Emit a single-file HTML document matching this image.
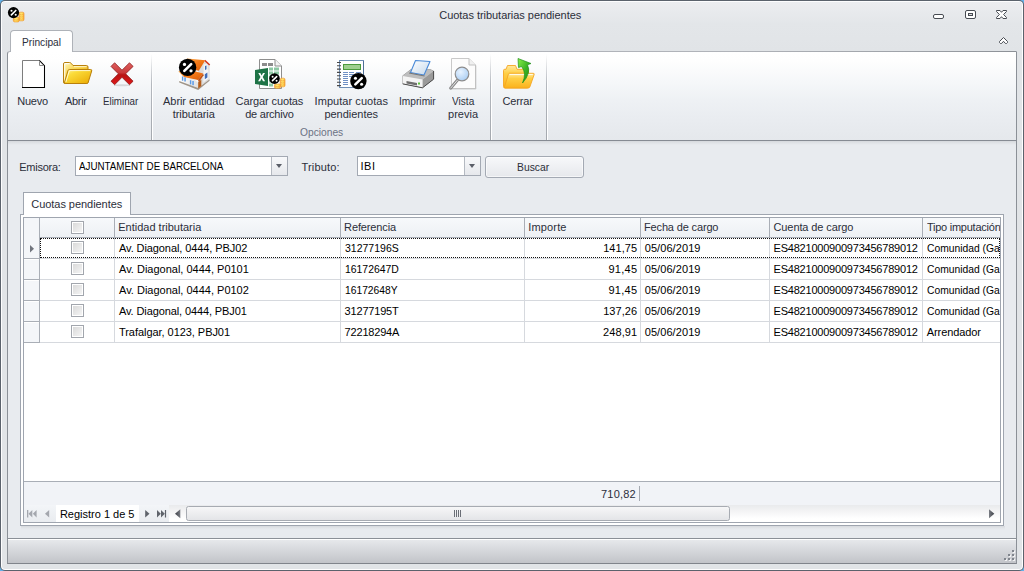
<!DOCTYPE html>
<html lang="es">
<head>
<meta charset="utf-8">
<title>Cuotas tributarias pendientes</title>
<style>
*{box-sizing:border-box;margin:0;padding:0}
html,body{width:1024px;height:571px;overflow:hidden;background:#64b2ea}
body{font-family:"Liberation Sans",sans-serif;font-size:11px;color:#2b2e3a;position:relative;line-height:13px}
div,svg{position:absolute}
.t{white-space:nowrap;height:13px;line-height:13px}
#win{left:0;top:0;width:1024px;height:571px;background:#5b626c;border-radius:5px}
#hl{left:1px;top:1px;width:1022px;height:569px;background:#fdfdfe;border-radius:4px}
#frame{left:2px;top:2px;width:1020px;height:567px;background:#e1e4e7;border-radius:3px}
#titlebg{left:2px;top:2px;width:1020px;height:49px;background:linear-gradient(#ecedf0 0,#e3e6e9 45%,#e1e4e7 100%);border-radius:3px 3px 0 0}
/* ribbon */
#tab{left:10px;top:30px;width:63px;height:22px;background:#fff;border:1px solid #aeb2b8;border-bottom:0;border-radius:4px 4px 0 0}
#ribbon{left:7px;top:51px;width:1010px;height:90px;background:linear-gradient(#ffffff 0,#fefefe 10%,#f5f7f9 35%,#eef1f4 55%,#eaedf1 72%,#e5e8ec 100%);border:1px solid #b2b5bb;border-left-color:#8b9097;border-right-color:#8b9097;border-bottom-color:#868b93;border-radius:3px 0 0 0}
#rtop{left:60px;top:51px;width:956px;height:1px;background:linear-gradient(90deg,#b2b5bb 0,#b0b3b9 70%,#9da1a7 90%,#8c9096 100%)}
#tabcover{left:11px;top:51px;width:61px;height:1px;background:#fff}
.sep{top:54px;width:1px;height:86px;background:linear-gradient(rgba(169,173,179,0),#b4b8be 35%,#a4a8ae)}
.sep2{top:54px;width:1px;height:86px;background:linear-gradient(rgba(255,255,255,0),#fff 35%)}
/* content */
#content{left:7px;top:141px;width:1010px;height:397px;background:#e8ebef;border-left:1px solid #8b9097;border-right:1px solid #8b9097}
#shadow{left:8px;top:141px;width:1008px;height:4px;background:linear-gradient(#d5d8dc,#e0e3e7 50%,#e8ebef)}
.combo{top:156px;height:20px;background:#fff;border:1px solid #a3a9b3}
.combo .btn{right:0;top:0;width:16px;height:18px;border-left:1px solid #b4b9c1;background:linear-gradient(#f8f9fb,#e6e8ec)}
.combo .btn:after{content:"";position:absolute;left:4.4px;top:7px;border-style:solid;border-color:#5a5e68 transparent;border-width:4px 3.5px 0}
#buscar{left:485px;top:156px;width:99px;height:22px;border:1px solid #a3a9b3;border-radius:3px;background:linear-gradient(#f7f8fa,#e6e8ec);box-shadow:inset 0 0 0 1px rgba(255,255,255,.6)}
/* tab control */
#pshadow{left:21px;top:526px;width:984px;height:4px;background:linear-gradient(#d6d9dd,#e2e5e9 50%,#e8ebef)}
#page{left:20px;top:214px;width:984px;height:312px;background:#fff;border:1px solid #9fa5af}
#ptab{left:23px;top:192px;width:108px;height:23px;background:#fff;border:1px solid #9fa5af;border-bottom:0}
#grid{left:23px;top:217px;width:978px;height:306px;border:1px solid #9fa5af;background:#fff;overflow:hidden}
#ghead{left:0;top:0;width:976px;height:20px;background:linear-gradient(#f7f9fb,#edf0f4);border-bottom:1px solid #a9aeb6}
#gind{left:0;top:0;width:16px;height:125px;background:#f4f6f9;border-right:1px solid #a9aeb6}
.hc{top:0;height:20px;border-left:1px solid #a9aeb6}
.il{left:0;width:15px;height:1px;background:#a9aeb6;box-shadow:0 1px 0 #fff}
.vl{top:20px;width:1px;height:104px;background:#d6d9de}
.hl{left:16px;width:960px;height:1px;background:#d6d9de}
.cb{width:13px;height:13px;border:1px solid #a2a6ad;background:#fff}
.cb:after{content:"";position:absolute;left:1px;top:1px;width:9px;height:9px;background:linear-gradient(135deg,#dadada,#f4f4f4)}
#focus{left:16px;top:20px;width:960px;height:20px;border:1px dotted #111}
#gfoot{left:0;top:263px;width:976px;height:24px;background:#f1f3f7;border-top:1px solid #a9aeb6}
#gnav{left:0;top:287px;width:976px;height:17px;background:linear-gradient(#e9eaec,#f6f6f7 45%,#fff 80%)}
#gnavb{left:0;top:287px;width:145px;height:17px;background:linear-gradient(#f3f5f8,#e9ecf0)}
#status{left:7px;top:538px;width:1010px;height:26px;border:1px solid #8b9097;border-bottom-color:#80848b;background:linear-gradient(#fff 0,#fff 1px,#e6e8eb 1px,#c2c4c9 100%)}
.dot{width:2px;height:2px;background:#80858d;box-shadow:1px 1px 0 rgba(255,255,255,.75)}
</style>
</head>
<body>
<div id="win"></div><div id="hl"></div><div id="frame"></div><div id="titlebg"></div>
<div id="ribbon"></div>
<div id="rtop"></div><div id="tab"></div><div id="tabcover"></div>
<div class="sep" style="left:151px"></div><div class="sep2" style="left:152px"></div>
<div class="sep" style="left:490px"></div><div class="sep2" style="left:491px"></div>
<div class="sep" style="left:546px"></div><div class="sep2" style="left:547px"></div>
<div id="content"></div>
<div id="shadow"></div>
<div class="combo" style="left:75px;width:213px"><div class="btn"></div></div>
<div class="combo" style="left:357px;width:124px"><div class="btn"></div></div>
<div id="buscar"></div>
<div id="pshadow"></div>
<div id="page"></div>
<div id="ptab"></div>
<div id="grid">
  <div id="ghead"></div>
  <div id="gind"></div>
  <div class="il" style="top:40px"></div><div class="il" style="top:61px"></div><div class="il" style="top:82px"></div><div class="il" style="top:103px"></div><div class="il" style="top:124px;width:16px"></div>
  <div class="hc" style="left:15px;width:75px"></div>
  <div class="hc" style="left:90px;width:226px"></div>
  <div class="hc" style="left:316px;width:184px"></div>
  <div class="hc" style="left:500px;width:116px"></div>
  <div class="hc" style="left:616px;width:129px"></div>
  <div class="hc" style="left:745px;width:153px"></div>
  <div class="hc" style="left:898px;width:80px"></div>
  <div class="vl" style="left:90px"></div>
  <div class="vl" style="left:316px"></div>
  <div class="vl" style="left:500px"></div>
  <div class="vl" style="left:616px"></div>
  <div class="vl" style="left:745px"></div>
  <div class="vl" style="left:898px"></div>
  <div class="hl" style="top:40px"></div>
  <div class="hl" style="top:61px"></div>
  <div class="hl" style="top:82px"></div>
  <div class="hl" style="top:103px"></div>
  <div class="hl" style="top:124px"></div>
  <div id="focus"></div>
  <div class="cb" style="left:47px;top:3px"></div>
  <div class="cb" style="left:47px;top:23px"></div>
  <div class="cb" style="left:47px;top:44px"></div>
  <div class="cb" style="left:47px;top:65px"></div>
  <div class="cb" style="left:47px;top:86px"></div>
  <div class="cb" style="left:47px;top:107px"></div>
  <div id="gfoot"></div>
  <div id="gnav"></div><div id="gnavb"></div>
</div>
<div style="left:639px;top:486px;width:1px;height:15px;background:#a4a9b1"></div>
<div style="left:56px;top:505px;width:83px;height:17px;background:#fff"></div>
<div id="status"></div>
<div class="dot" style="left:1012px;top:550px"></div>
<div class="dot" style="left:1008px;top:554px"></div><div class="dot" style="left:1012px;top:554px"></div>
<div class="dot" style="left:1004px;top:558px"></div><div class="dot" style="left:1008px;top:558px"></div><div class="dot" style="left:1012px;top:558px"></div>
<div class="t" style="left:439.3px;top:9px;letter-spacing:-0.04px">Cuotas tributarias pendientes</div>
<div class="t" style="left:21.5px;top:36px;transform:scaleX(0.9244);transform-origin:0 0">Principal</div>
<div class="t" style="left:17.2px;top:95px;letter-spacing:-0.2px">Nuevo</div>
<div class="t" style="left:65px;top:95px;letter-spacing:-0.3px">Abrir</div>
<div class="t" style="left:103.3px;top:95px;transform:scaleX(0.8872);transform-origin:0 0">Eliminar</div>
<div class="t" style="left:163.1px;top:95px;letter-spacing:-0.08px">Abrir entidad</div>
<div class="t" style="left:172.7px;top:108px;letter-spacing:-0.07px">tributaria</div>
<div class="t" style="left:235.6px;top:95px;letter-spacing:-0.11px">Cargar cuotas</div>
<div class="t" style="left:245.2px;top:108px;letter-spacing:-0.24px">de archivo</div>
<div class="t" style="left:314.6px;top:95px;letter-spacing:0.05px">Imputar cuotas</div>
<div class="t" style="left:324.4px;top:108px;letter-spacing:-0.01px">pendientes</div>
<div class="t" style="left:398.6px;top:95px;transform:scaleX(0.9256);transform-origin:0 0">Imprimir</div>
<div class="t" style="left:452.2px;top:95px;transform:scaleX(0.9167);transform-origin:0 0">Vista</div>
<div class="t" style="left:448.1px;top:108px">previa</div>
<div class="t" style="left:502.5px;top:95px;letter-spacing:-0.14px">Cerrar</div>
<div class="t" style="left:300.2px;top:126px;transform:scaleX(0.9304);transform-origin:0 0;color:#6c7284">Opciones</div>
<div class="t" style="left:19.3px;top:161px;letter-spacing:-0.27px">Emisora:</div>
<div class="t" style="left:78.9px;top:160px;transform:scaleX(0.8895);transform-origin:0 0;color:#000">AJUNTAMENT DE BARCELONA</div>
<div class="t" style="left:301.6px;top:161px;letter-spacing:0.14px">Tributo:</div>
<div class="t" style="left:360.6px;top:160px;letter-spacing:0.45px;color:#000">IBI</div>
<div class="t" style="left:517.3px;top:161px;transform:scaleX(0.9394);transform-origin:0 0">Buscar</div>
<div class="t" style="left:31.3px;top:198px;letter-spacing:-0.05px">Cuotas pendientes</div>
<div class="t" style="left:118.3px;top:221px;letter-spacing:-0.01px">Entidad tributaria</div>
<div class="t" style="left:344.1px;top:221px;letter-spacing:-0.13px">Referencia</div>
<div class="t" style="left:528.3px;top:221px;letter-spacing:0.15px">Importe</div>
<div class="t" style="left:644.0px;top:221px;letter-spacing:-0.15px">Fecha de cargo</div>
<div class="t" style="left:773.5px;top:221px;letter-spacing:-0.1px">Cuenta de cargo</div>
<div class="t" style="left:926.9px;top:221px;letter-spacing:-0.24px;width:73.1px;overflow:hidden">Tipo imputación</div>
<div class="t" style="left:119px;top:242px;letter-spacing:-0.09px;color:#000">Av. Diagonal, 0444, PBJ02</div>
<div class="t" style="left:344.6px;top:242px;transform:scaleX(0.9545);transform-origin:0 0;color:#000">31277196S</div>
<div class="t" style="left:603.2px;top:242px;letter-spacing:0.06px;color:#000">141,75</div>
<div class="t" style="left:644.7px;top:242px;letter-spacing:0.08px;color:#000">05/06/2019</div>
<div class="t" style="left:773.5px;top:242px;letter-spacing:-0.21px;color:#000">ES4821000900973456789012</div>
<div class="t" style="left:926.5px;top:242px;transform:scaleX(0.9377);transform-origin:0 0;color:#000;width:78.4px;overflow:hidden">Comunidad (Ga</div>
<div class="t" style="left:119px;top:263px;color:#000">Av. Diagonal, 0444, P0101</div>
<div class="t" style="left:345.2px;top:263px;transform:scaleX(0.9464);transform-origin:0 0;color:#000">16172647D</div>
<div class="t" style="left:608.5px;top:263px;letter-spacing:0.25px;color:#000">91,45</div>
<div class="t" style="left:644.7px;top:263px;letter-spacing:0.08px;color:#000">05/06/2019</div>
<div class="t" style="left:773.5px;top:263px;letter-spacing:-0.21px;color:#000">ES4821000900973456789012</div>
<div class="t" style="left:926.5px;top:263px;transform:scaleX(0.9377);transform-origin:0 0;color:#000;width:78.4px;overflow:hidden">Comunidad (Ga</div>
<div class="t" style="left:119px;top:284px;color:#000">Av. Diagonal, 0444, P0102</div>
<div class="t" style="left:345.2px;top:284px;transform:scaleX(0.9345);transform-origin:0 0;color:#000">16172648Y</div>
<div class="t" style="left:608.5px;top:284px;letter-spacing:0.25px;color:#000">91,45</div>
<div class="t" style="left:644.7px;top:284px;letter-spacing:0.08px;color:#000">05/06/2019</div>
<div class="t" style="left:773.5px;top:284px;letter-spacing:-0.21px;color:#000">ES4821000900973456789012</div>
<div class="t" style="left:926.5px;top:284px;transform:scaleX(0.9377);transform-origin:0 0;color:#000;width:78.4px;overflow:hidden">Comunidad (Ga</div>
<div class="t" style="left:119px;top:305px;letter-spacing:-0.11px;color:#000">Av. Diagonal, 0444, PBJ01</div>
<div class="t" style="left:344.6px;top:305px;letter-spacing:-0.19px;color:#000">31277195T</div>
<div class="t" style="left:603.2px;top:305px;letter-spacing:0.06px;color:#000">137,26</div>
<div class="t" style="left:644.7px;top:305px;letter-spacing:0.08px;color:#000">05/06/2019</div>
<div class="t" style="left:773.5px;top:305px;letter-spacing:-0.21px;color:#000">ES4821000900973456789012</div>
<div class="t" style="left:926.5px;top:305px;transform:scaleX(0.9377);transform-origin:0 0;color:#000;width:78.4px;overflow:hidden">Comunidad (Ga</div>
<div class="t" style="left:119px;top:326px;letter-spacing:-0.05px;color:#000">Trafalgar, 0123, PBJ01</div>
<div class="t" style="left:344.6px;top:326px;letter-spacing:-0.19px;color:#000">72218294A</div>
<div class="t" style="left:603.0px;top:326px;letter-spacing:0.1px;color:#000">248,91</div>
<div class="t" style="left:644.7px;top:326px;letter-spacing:0.08px;color:#000">05/06/2019</div>
<div class="t" style="left:773.5px;top:326px;letter-spacing:-0.21px;color:#000">ES4821000900973456789012</div>
<div class="t" style="left:926.8px;top:326px;letter-spacing:-0.09px;color:#000">Arrendador</div>
<div class="t" style="left:601.0px;top:488px;letter-spacing:0.2px">710,82</div>
<div class="t" style="left:59.9px;top:508px;color:#000">Registro 1 de 5</div>
<svg width="1024" height="571" viewBox="0 0 1024 571" style="left:0;top:0;pointer-events:none">
<defs>
<linearGradient id="gcoin" x1="0" y1="0" x2="1" y2="0"><stop offset="0" stop-color="#f8b040"/><stop offset=".4" stop-color="#ffec70"/><stop offset=".7" stop-color="#ffd850"/><stop offset="1" stop-color="#f5a030"/></linearGradient>
<linearGradient id="gfold" x1="0" y1="0" x2="1" y2="1"><stop offset="0" stop-color="#fff3a0"/><stop offset=".3" stop-color="#fbdc3a"/><stop offset="1" stop-color="#eaa800"/></linearGradient>
<linearGradient id="gfoldb" x1="0" y1="0" x2="1" y2="1"><stop offset="0" stop-color="#fff6c0"/><stop offset=".4" stop-color="#f9d54a"/><stop offset="1" stop-color="#e5a200"/></linearGradient>
<linearGradient id="gfold2" x1="0" y1="0" x2="0" y2="1"><stop offset="0" stop-color="#ffe9a0"/><stop offset=".35" stop-color="#ffcf45"/><stop offset="1" stop-color="#fbb21c"/></linearGradient>
<linearGradient id="gred" x1="0" y1="0" x2="0" y2="1"><stop offset="0" stop-color="#e06060"/><stop offset=".45" stop-color="#c83a3a"/><stop offset=".55" stop-color="#b81414"/><stop offset="1" stop-color="#e01818"/></linearGradient>
<linearGradient id="groof" x1="0" y1="0" x2="1" y2="1"><stop offset="0" stop-color="#ffb050"/><stop offset=".5" stop-color="#f57a18"/><stop offset="1" stop-color="#d85a08"/></linearGradient>
<linearGradient id="gwall" x1="0" y1="0" x2="1" y2="0"><stop offset="0" stop-color="#ffffff"/><stop offset="1" stop-color="#e0e0e0"/></linearGradient>
<linearGradient id="gprn" x1="0" y1="0" x2="0" y2="1"><stop offset="0" stop-color="#a8a8a8"/><stop offset="1" stop-color="#dcdcdc"/></linearGradient>
<linearGradient id="gpaper" x1="0" y1="0" x2="1" y2="1"><stop offset="0" stop-color="#ffffff"/><stop offset="1" stop-color="#c4d8ec"/></linearGradient>
<radialGradient id="glens" cx=".4" cy=".35" r=".7"><stop offset="0" stop-color="#e8f3ff"/><stop offset="1" stop-color="#a9cdf3"/></radialGradient>
<linearGradient id="ggreen" x1="0" y1="0" x2="1" y2="1"><stop offset="0" stop-color="#8af048"/><stop offset=".5" stop-color="#3cb424"/><stop offset="1" stop-color="#1a8a14"/></linearGradient>
<linearGradient id="gthumb" x1="0" y1="0" x2="0" y2="1"><stop offset="0" stop-color="#f7f7f8"/><stop offset="1" stop-color="#e3e4e7"/></linearGradient>
<linearGradient id="garr" x1="0" y1="0" x2="1" y2="0"><stop offset="0" stop-color="#7a7d84"/><stop offset="1" stop-color="#3c3f46"/></linearGradient>
<linearGradient id="garl" x1="1" y1="0" x2="0" y2="0"><stop offset="0" stop-color="#7a7d84"/><stop offset="1" stop-color="#3c3f46"/></linearGradient>
</defs>
<g><rect x="19.00" y="12.20" width="5.00" height="8.60" rx="1.3" ry="1.6" fill="url(#gcoin)" stroke="#f09a30" stroke-width="0.7"/><path d="M19.30 14.35Q21.50 15.45 23.70 14.35" fill="none" stroke="#f2a040" stroke-width="0.7"/><path d="M19.30 16.50Q21.50 17.60 23.70 16.50" fill="none" stroke="#f2a040" stroke-width="0.7"/><path d="M19.30 18.65Q21.50 19.75 23.70 18.65" fill="none" stroke="#f2a040" stroke-width="0.7"/><rect x="13.30" y="17.30" width="6.00" height="4.60" rx="1.3" ry="1.6" fill="url(#gcoin)" stroke="#f09a30" stroke-width="0.7"/><path d="M13.60 19.60Q16.30 20.70 19.00 19.60" fill="none" stroke="#f2a040" stroke-width="0.7"/><circle cx="13.5" cy="12.6" r="5.6" fill="#000"/><line x1="11.40" y1="14.80" x2="15.80" y2="10.50" stroke="#fff" stroke-width="1.70" stroke-linecap="round"/><circle cx="11.50" cy="10.70" r="1.05" fill="#fff"/><circle cx="15.70" cy="14.80" r="1.05" fill="#fff"/></g>
<rect x="933.5" y="14.5" width="10" height="4" rx="1.5" fill="#fff" stroke="#474b52"/>
<rect x="965.5" y="10.5" width="10" height="8" rx="1.5" fill="#fff" stroke="#474b52"/><rect x="968.5" y="13.5" width="4" height="2" fill="#d8dade" stroke="#474b52"/>
<path d="M996.5 10.5H1000L1001.5 12.3L1003 10.5H1006.5V11.5L1003.6 14.5L1006.5 17.5V18.5H1003L1001.5 16.7L1000 18.5H996.5V17.5L999.4 14.5L996.5 11.5Z" fill="#fff" stroke="#474b52" stroke-linejoin="round"/>
<path d="M999.5 41.5L1003.5 37.5L1007.5 41.5V42.5L1006.5 43.5H1005.5L1003.5 41.3L1001.5 43.5H1000.5L999.5 42.5Z" fill="#fff" stroke="#474b52" stroke-linejoin="round"/>
<g>
<path d="M22.5 60.5H39L44.5 66V87.5H22.5Z" fill="#fff"/>
<path d="M22.5 87.5V60.5H39" fill="none" stroke="#7d7d7d"/>
<path d="M39.3 60.3L44.5 65.6V87.5H22" fill="none" stroke="#000" stroke-width="1.05"/>
<path d="M39.5 61.5V65.5H43.6" fill="none" stroke="#8a8a8a" stroke-width="1"/>
</g>
<g stroke-linejoin="round">
<path d="M63.5 64Q63.5 62.5 65 62.5H69.5Q70.5 62.5 71.2 63.3L73 65.5H86.5Q88 65.5 88 67V82Q88 83.5 86.5 83.5H65Q63.5 83.5 63.5 82Z" fill="url(#gfoldb)" stroke="#b9800c"/>
<path d="M64.7 82V64.3Q64.7 63.6 65.4 63.6H69.5" fill="none" stroke="#fff" stroke-width="1.1" opacity=".85"/>
<path d="M74 66.7H86.6" stroke="#fff7d0" stroke-width="1"/>
<path d="M69.3 69.5H90.6Q92.2 69.5 91.7 71L88.2 82.4Q87.8 83.5 86.5 83.5H65.3Q64 83.5 64.5 82.2L68 70.5Q68.3 69.5 69.3 69.5Z" fill="url(#gfold)" stroke="#b9800c"/>
<path d="M65.9 82L69.3 70.9Q69.4 70.6 69.9 70.6H90.3" fill="none" stroke="#fffbe0" stroke-width="1" opacity=".9"/>
</g>
<g>
<ellipse cx="122" cy="85.2" rx="8" ry="1" fill="#000" opacity=".12"/>
<path d="M114.6 62.8L122 70.2L129.5 62.8L133.1 66.4L125.6 73.8L133.1 81.2L129.5 84.7L122 77.3L114.6 84.7L111 81.2L118.4 73.8L111 66.4Z" fill="url(#gred)" stroke="#8e1c1c" stroke-width=".8" stroke-linejoin="round"/>
</g>
<g stroke-linejoin="round">
<path d="M179.2 81L179.2 72L191 76.5L198.2 83V88Z" fill="url(#gwall)"/>
<path d="M198.2 88V71L205.3 60.8L209.6 65.5V79.3Z" fill="#dcdcdc"/>
<path d="M203.6 64.6L207.6 63.2V70.6L203.6 73Z" fill="#f4f4f4"/>
<path d="M203.4 72.4L208.4 69.6V78.6L203.4 82.4Z" fill="#f4f4f4"/>
<path d="M179.2 81L198.2 88L209.6 79.3V80.8L198.2 90L179.2 82.6Z" fill="#a0968a"/>
<path d="M187 58.6L205.3 60.2L198.8 70.8L183 67.5Z" fill="url(#groof)"/>
<path d="M205.2 59.8L210.2 64.6L209.2 65.6L204.6 61.2Z" fill="#d2321a"/>
<path d="M178.3 71.2L190 70L203.1 73.4L198 80L184 77Z" fill="url(#groof)"/>
<path d="M198 80L203.1 73.4L203.6 75.2L199 82Z" fill="#c4500e"/>
<rect x="181.9" y="76.5" width="1.4" height="4.2" fill="#5a9ae6"/><rect x="184.3" y="77.3" width="1.5" height="4.2" fill="#5a9ae6"/>
<rect x="189.9" y="80.2" width="1.4" height="4.2" fill="#5a9ae6"/><rect x="192.3" y="81" width="1.5" height="4.2" fill="#5a9ae6"/>
<path d="M198.2 82.2L201.3 79.6V86L198.2 88.4Z" fill="#b45c1a"/>
<path d="M205 66L206.5 65.4V69.2L205 70Z" fill="#3f6cb8"/>
<path d="M204.8 74.2L207.4 72.6V77.6L204.8 79.2Z" fill="#3f6cb8"/>
</g>
<circle cx="187.6" cy="67.4" r="8.7" fill="#000"/><line x1="184.34" y1="70.82" x2="191.17" y2="64.14" stroke="#fff" stroke-width="2.64" stroke-linecap="round"/><circle cx="184.49" cy="64.45" r="1.63" fill="#fff"/><circle cx="191.02" cy="70.82" r="1.63" fill="#fff"/>
<g>
<path d="M259.5 59.5H275L281.5 66V88.5H259.5Z" fill="#fff" stroke="#8e8e8e"/>
<path d="M275 59.5V66H281.5" fill="#f4f4f4" stroke="#8e8e8e"/>
<rect x="262" y="63" width="5" height="3" fill="#8c8c8c"/><rect x="268" y="63" width="5" height="3" fill="#8c8c8c"/>
<g fill="#8cc8a4"><rect x="269" y="67.5" width="4" height="3"/><rect x="274" y="67.5" width="5" height="3"/><rect x="269" y="71.5" width="4" height="3"/><rect x="274" y="71.5" width="5" height="3"/><rect x="269" y="75.5" width="4" height="3"/><rect x="269" y="79.5" width="4" height="3"/><rect x="269" y="83.5" width="4" height="3"/></g>
<path d="M255 70L268 68V86L255 84Z" fill="#1e7346"/>
<path d="M258.3 73L260.3 73L261.6 75.6L263 73L265 73L262.7 77L265.1 81.2H263L261.6 78.5L260.2 81.2H258.1L260.5 77Z" fill="#fff"/>
</g>
<g><rect x="280.20" y="78.20" width="4.80" height="8.60" rx="1.3" ry="1.6" fill="url(#gcoin)" stroke="#f09a30" stroke-width="0.7"/><path d="M280.50 80.35Q282.60 81.45 284.70 80.35" fill="none" stroke="#f2a040" stroke-width="0.7"/><path d="M280.50 82.50Q282.60 83.60 284.70 82.50" fill="none" stroke="#f2a040" stroke-width="0.7"/><path d="M280.50 84.65Q282.60 85.75 284.70 84.65" fill="none" stroke="#f2a040" stroke-width="0.7"/><rect x="274.40" y="84.00" width="6.20" height="4.20" rx="1.3" ry="1.6" fill="url(#gcoin)" stroke="#f09a30" stroke-width="0.7"/><path d="M274.70 86.10Q277.50 87.20 280.30 86.10" fill="none" stroke="#f2a040" stroke-width="0.7"/><circle cx="274.5" cy="78.6" r="5.3" fill="#000"/><line x1="272.51" y1="80.68" x2="276.68" y2="76.61" stroke="#fff" stroke-width="1.61" stroke-linecap="round"/><circle cx="272.61" cy="76.80" r="0.99" fill="#fff"/><circle cx="276.58" cy="80.68" r="0.99" fill="#fff"/></g>
<g>
<rect x="339.5" y="60.5" width="24" height="27" fill="#fff" stroke="#6f8fb6"/>
<path d="M363.5 61V87.5" stroke="#4f6f96" stroke-width="1"/>
<rect x="343.5" y="64.5" width="17" height="5" fill="#9fcf8f" stroke="#4c9a3c"/>
<g stroke="#7090c4" stroke-width="1"><path d="M343 72.5H348M349 72.5H354M356 72.5H361M343 74.5H348M349 74.5H354M343 76.5H348M349 76.5H354M343 78.5H348M343 80.5H348M343 82.5H348M343 84.5H348"/></g>
<g stroke="#4a4a4a" stroke-width="1.1" fill="none"><path d="M337 62.5H341M337 65.8H341M337 69.1H341M337 72.4H341M337 75.7H341M337 79H341M337 82.3H341M337 85.6H341"/></g>
</g>
<circle cx="358.4" cy="81.1" r="8.2" fill="#000"/><line x1="355.32" y1="84.32" x2="361.77" y2="78.02" stroke="#fff" stroke-width="2.49" stroke-linecap="round"/><circle cx="355.47" cy="78.32" r="1.54" fill="#fff"/><circle cx="361.62" cy="84.32" r="1.54" fill="#fff"/>
<g stroke-linejoin="round">
<path d="M402.5 76L411 69.5H430L433.5 71V79L422.5 87.5L402.5 83.5Z" fill="#c4c4c4" stroke="#8c8c8c" stroke-width=".8"/>
<path d="M422.5 79.5L433.5 71V79L422.5 87.5Z" fill="#9a9a9a"/>
<path d="M402.5 76L411 69.5H430L433.5 71L422.5 79.5Z" fill="#bdbdbd"/>
<path d="M402.5 76L422.5 79.5V87.5L402.5 83.5Z" fill="#f4f4f4"/>
<path d="M433.6 71V79.2L422.5 87.8L402.8 83.9" fill="none" stroke="#4c4c4c" stroke-width="1"/>
<path d="M406.5 81L417 83V85.5L406.5 83.5Z" fill="#6e6e6e"/>
<rect x="418" y="82.5" width="2" height="2" fill="#5cc03c"/>
<path d="M415.5 60.5L430 61.5L424 75L410.5 72.5Z" fill="url(#gpaper)" stroke="#4a8ad8" stroke-width="1.1"/>
<path d="M409 73L424.5 76" stroke="#777" stroke-width="1"/>
</g>
<g>
<path d="M451.5 58.5H469L475.5 65V88.5H451.5Z" fill="#fcfcfc" stroke="#c9c9c9"/>
<path d="M469 58.5V65H475.5" fill="#f0f0f0" stroke="#c2c2c2"/>
<path d="M475.9 65.5V89H452" fill="none" stroke="#b4b4b4" stroke-width=".8" opacity=".7"/>
<path d="M457.5 80L450.6 88.2" stroke="#8a8a8a" stroke-width="3" stroke-linecap="round"/>
<path d="M457.3 80.3L450.8 88" stroke="#e4e4e4" stroke-width="1" stroke-linecap="round"/>
<circle cx="462" cy="74" r="6.8" fill="url(#glens)" stroke="#8d8d8d" stroke-width="1.2"/>
</g>
<g stroke-linejoin="round">
<path d="M503.5 70.5Q503.5 69.3 504.7 69.3H506L507.5 65.5H515.5L517 69.3H527Q528.5 69.3 528.5 70.8V86.5Q528.5 88 527 88H505Q503.5 88 503.5 86.5Z" fill="url(#gfold2)" stroke="#f5a623" stroke-width=".9"/>
<path d="M509.3 73.3H533.2Q534.6 73.3 534.1 74.7L529.8 87Q529.4 88 528.2 88H505.3Q504 88 504.5 86.7L508.4 74.3Q508.7 73.3 509.3 73.3Z" fill="url(#gfold2)" stroke="#f5a623" stroke-width=".9"/>
<path d="M509.6 74.5H532.8" stroke="#fffbe8" stroke-width="1.1"/>
<path d="M518 58.5L531 63.5L527.5 64.8Q531.5 73 522.5 83Q527 73 521.5 66.5L518.5 67.6Z" fill="url(#ggreen)" stroke="#1f8f1a" stroke-width=".7"/>
</g>
<path d="M30 245L34 248.8L30 252.5Z" fill="#70747d"/>
<g fill="#a4a7ae"><rect x="27" y="510" width="1.3" height="7.5"/><path d="M32.3 510V517.5L28.5 513.75Z"/><path d="M36.6 510V517.5L32.8 513.75Z"/><path d="M49.2 510V517.5L45 513.75Z"/></g>
<g fill="#5f636b"><path d="M145.2 510V517.5L149.5 513.75Z"/><path d="M157 510V517.5L160.8 513.75Z"/><path d="M161 510V517.5L164.8 513.75Z"/><rect x="164.9" y="510" width="1.2" height="7.5"/></g>
<path d="M180.3 509.3V518.2L175 513.75Z" fill="url(#garl)"/>
<path d="M989 509.3V518.2L994.3 513.75Z" fill="url(#garr)"/>
<rect x="186.5" y="506.5" width="543" height="14" rx="2" fill="url(#gthumb)" stroke="#a7abb2"/>
<path d="M454.5 510V517M456.5 510V517M458.5 510V517M460.5 510V517" stroke="#6a6e76" stroke-width="1"/>
</svg>
</body>
</html>
